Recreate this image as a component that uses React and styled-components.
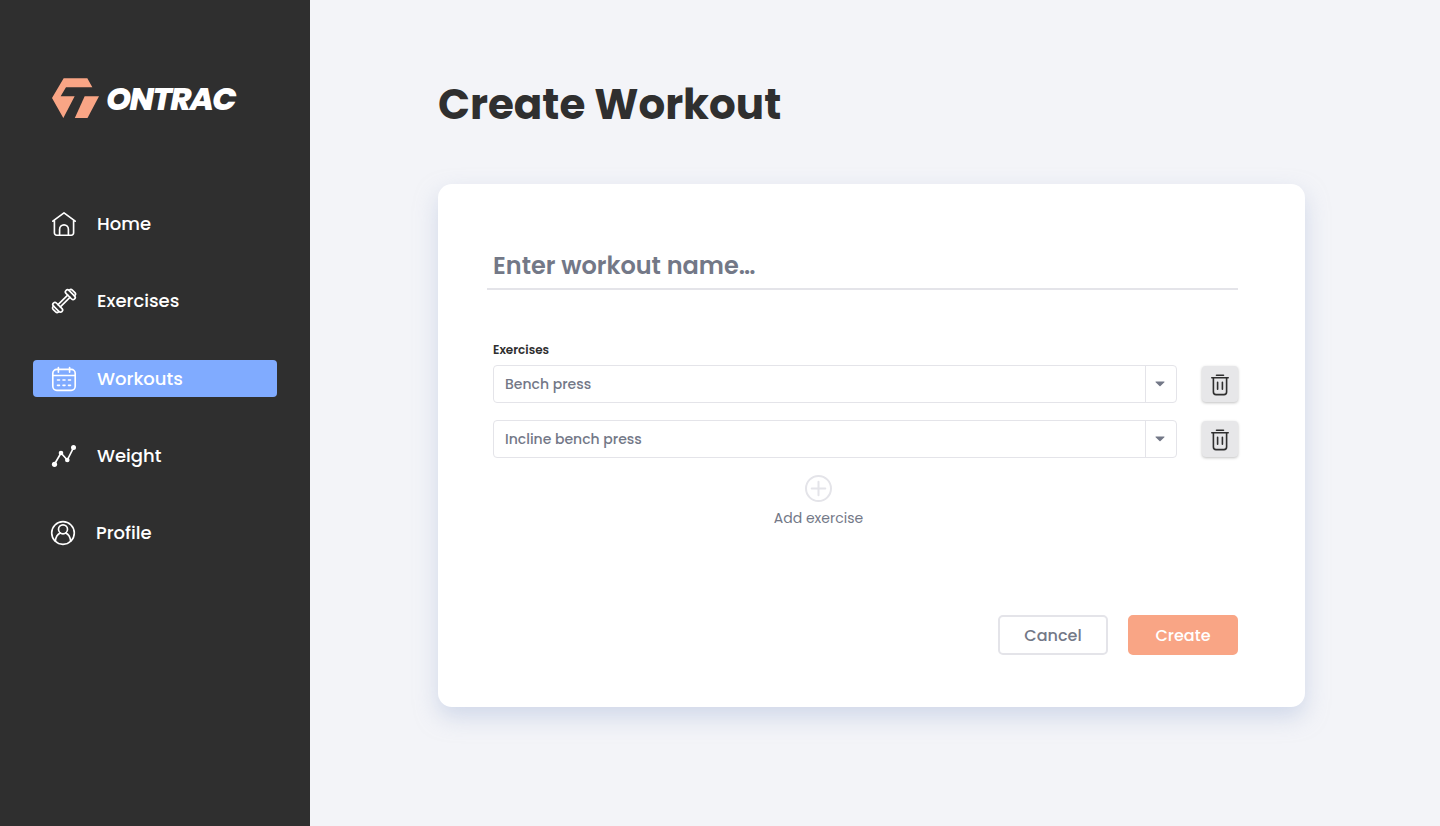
import React from "react";
import styled, { createGlobalStyle, css } from "styled-components";

const dark = "#2f2f2f";
const grey = "#737887";
const line = "#e4e4e9";
const orange = "#f9a585";

const GlobalStyle = createGlobalStyle`
  *, *::before, *::after { box-sizing: border-box; }
  body {
    margin: 0;
    background: #f3f4f8;
    color: ${dark};
    font-family: Poppins, Inter, "Open Sans", sans-serif;
  }
  button, input { font: inherit; letter-spacing: inherit; }
`;

const Page = styled.div`
  display: flex;
  height: 826px;
  overflow: hidden;
`;

const Sidebar = styled.aside`
  width: 310px;
  flex: none;
  background: ${dark};
  padding: 77px 33px 0;
`;

const Brand = styled.div`
  display: flex;
  align-items: center;
  height: 42px;
  padding-left: 19px;
  margin-bottom: 86.5px;
`;

const BrandName = styled.span`
  margin-left: 7px;
  padding-top: 2px;
  color: #fff;
  font-size: 32px;
  font-weight: 800;
  font-style: italic;
  letter-spacing: -1.6px;
  line-height: 42px;
`;

const Nav = styled.nav`
  display: flex;
  flex-direction: column;
  gap: 40.25px;
`;

const NavItem = styled.a`
  display: flex;
  align-items: center;
  gap: 21px;
  height: 37px;
  padding: 0 0 0.6px ${(p) => p.$inset || 19}px;
  border-radius: 4px;
  color: #fff;
  font-size: 18px;
  font-weight: 500;
  ${(p) => p.$active && css`background: #80abff;`}
`;

const NavIcon = styled.svg`
  width: 24px;
  height: 24px;
  flex: none;
  margin-top: 0.6px;
  fill: none;
  stroke: #fff;
  stroke-width: 1.65;
  stroke-linecap: round;
  stroke-linejoin: round;
  overflow: visible;
`;

const Main = styled.main`
  flex: 1;
  padding: 75px 135px 0 128px;
`;

const Title = styled.h1`
  margin: 0 0 49px;
  font-size: 42px;
  line-height: 60px;
  font-weight: 700;
`;

const Card = styled.section`
  height: 523px;
  padding: 61px 67px 0 49px;
  border-radius: 14px;
  background: #fff;
  box-shadow: 0 10px 22px rgba(176, 190, 220, 0.5);
`;

const NameInput = styled.input`
  display: block;
  width: 100%;
  height: 45px;
  padding: 0 6px 2px;
  border: 0;
  border-bottom: 2px solid ${line};
  outline: 0;
  background: none;
  font-size: 24px;
  font-weight: 600;
  &::placeholder { color: ${grey}; opacity: 1; }
`;

const Field = styled.div`
  padding: 51px 0 0 6px;
`;

const FieldLabel = styled.div`
  font-size: 12px;
  line-height: 18px;
  font-weight: 600;
  margin-bottom: 6px;
`;

const Rows = styled.div`
  display: flex;
  flex-direction: column;
  gap: 17px;
`;

const Row = styled.div`
  display: flex;
  align-items: center;
  justify-content: space-between;
  height: 38px;
`;

const Select = styled.div`
  display: flex;
  width: 684px;
  height: 38px;
  border: 1px solid ${line};
  border-radius: 4px;
  color: ${grey};
`;

const SelectValue = styled.div`
  flex: 1;
  padding-left: 11px;
  font-size: 14px;
  font-weight: 500;
  line-height: 36px;
`;

const SelectArrow = styled.div`
  display: flex;
  align-items: center;
  width: 31px;
  padding-left: 9px;
  border-left: 1px solid ${line};
`;

const DeleteButton = styled.button`
  display: flex;
  align-items: center;
  justify-content: center;
  width: 36px;
  height: 36px;
  padding: 2px 0 0;
  border: 0;
  border-radius: 4px;
  background: #e7e7e9;
  box-shadow: 0 1px 3px rgba(0, 0, 0, 0.25);
`;

const AddExercise = styled.button`
  display: flex;
  flex-direction: column;
  align-items: center;
  gap: 6px;
  width: 101px;
  margin: 17px 0 0 275px;
  padding: 0;
  border: 0;
  background: none;
  color: ${grey};
  font-size: 14px;
  line-height: 20px;
  white-space: nowrap;
`;

const Actions = styled.div`
  display: flex;
  justify-content: flex-end;
  gap: 20px;
  margin-top: 87px;
`;

const Button = styled.button`
  width: 110px;
  height: 40px;
  padding: 1px 0 0;
  border: 2px solid ${(p) => (p.$primary ? orange : line)};
  border-radius: 5px;
  background: ${(p) => (p.$primary ? orange : "#fff")};
  color: ${(p) => (p.$primary ? "#fff" : grey)};
  font-size: 16px;
  font-weight: 500;
`;

const LogoMark = () => (
  <svg width="47" height="40.4" viewBox="0 0 141 121" fill={orange}>
    <path d="M35 1H106L121 28H42L26 55H68L34 120L0 60Z" />
    <path d="M98 55H141L106 121H68Z" />
  </svg>
);

const HomeIcon = () => (
  <NavIcon viewBox="0 0 24 24">
    <path d="M.8 9.2L12 .8l11.2 8.4M2.4 8.2v12.6a2.3 2.3 0 0 0 2.3 2.4h14.6a2.3 2.3 0 0 0 2.3-2.4V8.2" />
    <path d="M7.6 23V17.300a4.400 4.400 0 0 1 8.800 0V23" />
  </NavIcon>
);

const DumbbellIcon = () => (
  <NavIcon viewBox="0 0 24 24">
    <g transform="rotate(-45 12 12)">
      <path d="M5.200 10.400H18.800M5.200 13.600H18.800" />
      <rect x="1" y="6" width="4.200" height="12" rx="2" />
      <rect x="18.800" y="6" width="4.200" height="12" rx="2" />
      <path d="M1 8.200H.4a2 2 0 0 0-2 2v3.600a2 2 0 0 0 2 2H1M23 8.200h.6a2 2 0 0 1 2 2v3.600a2 2 0 0 1-2 2H23" />
    </g>
  </NavIcon>
);

const CalendarIcon = () => (
  <NavIcon viewBox="0 0 24 24">
    <rect x=".8" y="2.300" width="22.400" height="21" rx="4" />
    <path d="M.8 8.500H23.200M6.400.5V5.200M17.600.5V5.200" />
    <path d="M5.500 13H7.500M11 13H13M16.500 13H18.500M5.500 18.300H7.500M11 18.300H13M16.500 18.300H18.500" />
  </NavIcon>
);

const WeightIcon = () => (
  <NavIcon viewBox="0 0 24 24">
    <path d="M2.300 20.500L9 9L15.300 16L21.700 3.300" />
    <g fill="#fff" stroke="none">
      <circle cx="2.500" cy="20.300" r="2.600" />
      <circle cx="9" cy="9" r="2.300" />
      <circle cx="15.300" cy="16" r="2.300" />
      <circle cx="21.500" cy="3.400" r="2.500" />
    </g>
  </NavIcon>
);

const ProfileIcon = () => (
  <NavIcon viewBox="0 0 24 24">
    <circle cx="12" cy="12" r="11.300" />
    <circle cx="12" cy="8.300" r="4.500" />
    <path d="M4.400 20.200C4.700 16 6.600 13.200 9.300 12M14.700 12c2.700 1.200 4.600 4 4.900 8.200" />
  </NavIcon>
);

const TrashIcon = () => (
  <svg width="18" height="22" viewBox="0 0 18 22" fill="none" stroke={dark} strokeWidth="1.6" strokeLinecap="round">
    <path d="M.8 3.800H17.200M5.500 1.300H12.500M2.400 3.800V18a2.600 2.600 0 0 0 2.600 2.600h8A2.600 2.600 0 0 0 15.600 18V3.800M6.600 8.300V15.300M11.400 8.300V15.300" />
  </svg>
);

const Caret = () => (
  <svg width="10" height="6" viewBox="0 0 10 6" fill={grey}>
    <path d="M.9.6H9.100a.4.4 0 0 1 .3.7L5.500 5a.7.7 0 0 1-1 0L.6 1.300A.4.4 0 0 1 .9.6Z" />
  </svg>
);

const PlusIcon = () => (
  <svg width="27" height="27" viewBox="0 0 27 27" fill="none" stroke={line} strokeWidth="2" strokeLinecap="round">
    <circle cx="13.500" cy="13.500" r="12.500" />
    <path d="M13.500 6.700V20.300M6.700 13.500H20.300" />
  </svg>
);

const navItems = [
  { label: "Home", icon: HomeIcon },
  { label: "Exercises", icon: DumbbellIcon },
  { label: "Workouts", icon: CalendarIcon, active: true },
  { label: "Weight", icon: WeightIcon },
  { label: "Profile", icon: ProfileIcon, inset: 18 },
];

const exercises = ["Bench press", "Incline bench press"];

export default function App() {
  return (
    <Page>
      <GlobalStyle />
      <Sidebar>
        <Brand>
          <LogoMark />
          <BrandName>ONTRAC</BrandName>
        </Brand>
        <Nav>
          {navItems.map(({ label, icon: Icon, active, inset }) => (
            <NavItem key={label} $active={active} $inset={inset}>
              <Icon />
              {label}
            </NavItem>
          ))}
        </Nav>
      </Sidebar>
      <Main>
        <Title>Create Workout</Title>
        <Card>
          <NameInput placeholder="Enter workout name…" />
          <Field>
            <FieldLabel>Exercises</FieldLabel>
            <Rows>
              {exercises.map((name) => (
                <Row key={name}>
                  <Select>
                    <SelectValue>{name}</SelectValue>
                    <SelectArrow><Caret /></SelectArrow>
                  </Select>
                  <DeleteButton aria-label="Delete"><TrashIcon /></DeleteButton>
                </Row>
              ))}
            </Rows>
            <AddExercise>
              <PlusIcon />
              Add exercise
            </AddExercise>
          </Field>
          <Actions>
            <Button>Cancel</Button>
            <Button $primary>Create</Button>
          </Actions>
        </Card>
      </Main>
    </Page>
  );
}
